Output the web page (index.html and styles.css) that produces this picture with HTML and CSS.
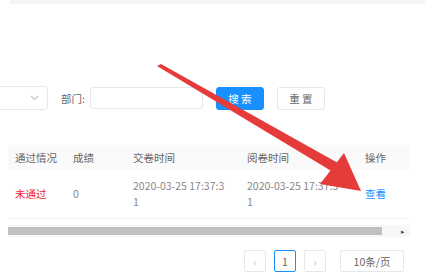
FILE: index.html
```html
<!DOCTYPE html>
<html lang="zh-CN">
<head>
<meta charset="UTF-8">
<title>考试记录</title>
<link rel="stylesheet" href="styles.css">
</head>
<body>
    <div class="page">
        <div class="topbar"></div>

        <div class="filters">
            <div class="select">
                <svg class="chevron" width="9" height="6" viewBox="0 0 9 6"><path d="M1 1 L4.5 4.5 L8 1" fill="none" stroke="#c0c4cc" stroke-width="1.2"/></svg>
            </div>
            <label class="label" for="dept">部门:</label>
            <input class="input" type="text" id="dept">
            <button class="btn btn-primary">搜 索</button>
            <button class="btn">重 置</button>
        </div>

        <div class="table">
            <div class="row head">
                <div class="cell c1">通过情况</div>
                <div class="cell c2">成绩</div>
                <div class="cell c3">交卷时间</div>
                <div class="cell c4">阅卷时间</div>
                <div class="cell c5">操作</div>
            </div>
            <div class="row body">
                <div class="cell c1 fail">未通过</div>
                <div class="cell c2">0</div>
                <div class="cell c3">2020-03-25 17:37:3<br>1</div>
                <div class="cell c4">2020-03-25 17:37:3<br>1</div>
                <div class="cell c5"><a class="link">查看</a></div>
            </div>
            <div class="scrollbar">
                <div class="thumb"></div>
                <span class="arrow">&#9656;</span>
            </div>
        </div>

        <div class="pager">
            <span class="pbox">&lsaquo;</span>
            <span class="pbox active">1</span>
            <span class="pbox">&rsaquo;</span>
            <span class="psize">10条/页</span>
        </div>

        <svg class="pointer" width="430" height="276" viewBox="0 0 430 276">
            <polygon points="157,66 161,64 338,163 333,172" fill="#e63b3b"/>
            <polygon points="361,191 320,184 344,153" fill="#e63b3b"/>
        </svg>
    </div>
</body>
</html>
```

FILE: styles.css
```css
body {
    margin: 0;
    padding: 0;
    font-family: "Noto Sans CJK SC", "Noto Sans", sans-serif;
    font-size: 10.5px;
    color: #666;
    background: #fff;
}

.page {
    position: relative;
    width: 430px;
    height: 276px;
    overflow: hidden;
}

.topbar {
    height: 4px;
    margin: 0 5px 0 10px;
    background: #f4f4f5;
}

.filters {
    display: flex;
    align-items: center;
    margin-top: 82px;
    height: 24px;
}

.select {
    width: 42px;
    height: 22px;
    margin-left: -4px;
    border: 1px solid #e4e7ed;
    border-radius: 3px;
    display: flex;
    align-items: center;
    justify-content: flex-end;
    padding-right: 8px;
}

.label {
    margin-left: 13px;
}

.input {
    width: 111px;
    height: 20px;
    margin-left: 5px;
    border: 1px solid #e4e7ed;
    border-radius: 3px;
    padding: 0;
}

.btn {
    margin-left: 13px;
    width: 48px;
    height: 23px;
    padding: 0;
    border: 1px solid #e4e7ed;
    border-radius: 3px;
    background: #fff;
    color: #666;
    font-family: inherit;
    font-size: 10.5px;
}

.btn-primary {
    background: #1890ff;
    border-color: #1890ff;
    color: #fff;
}

.table {
    margin: 35px 0 0 8px;
    width: 402px;
}

.row {
    display: flex;
}

.row.head {
    height: 25px;
    align-items: center;
    background: #fafafa;
}

.row.body {
    height: 48px;
    align-items: center;
    border-bottom: 1px solid #f0f0f0;
    line-height: 16px;
    color: #888;
}

.cell {
    padding-left: 7px;
    box-sizing: border-box;
}

.c1 { width: 58px; }
.c2 { width: 60px; }
.c3 { width: 114px; }
.c4 { width: 118px; }
.c5 { width: 52px; }

.fail {
    color: #f5222d;
}

.link {
    color: #1890ff;
}

.scrollbar {
    margin-top: 6px;
    height: 12px;
    display: flex;
    align-items: center;
    background: #f7f7f7;
}

.thumb {
    width: 374px;
    height: 8px;
    background: #c1c1c1;
}

.arrow {
    margin-left: 19px;
    font-size: 7px;
    color: #505050;
}

.pager {
    display: flex;
    align-items: center;
    margin: 13px 0 0 244px;
}

.pbox {
    width: 20px;
    height: 20px;
    border: 1px solid #e4e7ed;
    border-radius: 2px;
    margin-right: 8px;
    display: flex;
    align-items: center;
    justify-content: center;
    color: #c0c4cc;
}

.pbox.active {
    border-color: #1890ff;
    color: #666;
}

.psize {
    margin-left: 6px;
    width: 62px;
    height: 20px;
    border: 1px solid #e4e7ed;
    border-radius: 2px;
    display: flex;
    align-items: center;
    justify-content: center;
}

.pointer {
    position: absolute;
    left: 0;
    top: 0;
}
```
